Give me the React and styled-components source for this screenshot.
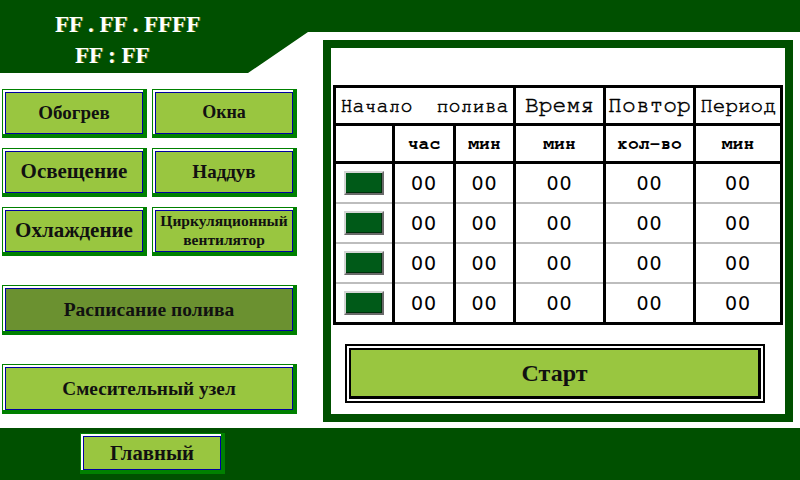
import React from "react";
import styled, { createGlobalStyle } from "styled-components";

const DARK = "#005000";
const FRAME = "#008000";
const FILL = "#99c640";
const FILL_ACTIVE = "#6b9130";

const GlobalStyle = createGlobalStyle`
  html, body {
    margin: 0;
    padding: 0;
    background: #ffffff;
    overflow: hidden;
  }
`;

const Screen = styled.div`
  width: 800px;
  height: 480px;
  display: grid;
  grid-template-rows: 428px 52px;
  background: #ffffff;
`;

const Main = styled.div`
  display: flex;
`;

const LeftCol = styled.div`
  width: 310px;
  display: flex;
  flex-direction: column;
`;

const Clock = styled.div`
  height: 73px;
  background: ${DARK};
  clip-path: polygon(0 0, 100% 0, 100% 32px, 308px 32px, 248px 73px, 0 73px);
  display: flex;
  flex-direction: column;
  font-family: "Liberation Serif", "Times New Roman", serif;
  font-weight: bold;
  font-size: 23px;
  color: #ffffff;
  text-shadow: 1px 0 0 rgba(200, 180, 60, 0.6);
`;

const ClockLine = styled.div`
  padding-left: ${(p) => p.$indent}px;
  height: 31px;
  line-height: 31px;
  margin-top: ${(p) => p.$top || 0}px;
  white-space: pre;
`;

const ButtonGrid = styled.div`
  margin-top: 16px;
  padding-left: 2px;
  display: grid;
  grid-template-columns: 145px 145px;
  grid-auto-rows: 49px;
  column-gap: 5px;
  row-gap: 10px;
`;

const WideStack = styled.div`
  margin-top: 29px;
  padding-left: 2px;
  display: flex;
  flex-direction: column;
  gap: 29px;
`;

const Btn = styled.button`
  box-sizing: border-box;
  width: ${(p) => p.$w}px;
  height: ${(p) => p.$h}px;
  margin: 0;
  padding: 2px 0 0 2px;
  border: 1px solid ${FRAME};
  border-right-width: 4px;
  border-bottom-width: 4px;
  background: #ffffff;
  display: flex;
  cursor: pointer;
`;

const Face = styled.span`
  box-sizing: border-box;
  flex: 1;
  display: flex;
  align-items: center;
  justify-content: center;
  text-align: center;
  border: 1px solid #0000a0;
  background: ${(p) => (p.$active ? FILL_ACTIVE : FILL)};
  font-family: "Liberation Serif", "Times New Roman", serif;
  font-weight: bold;
  font-size: ${(p) => p.$size}px;
  line-height: ${(p) => (p.$size < 17 ? 1.2 : 1.1)};
  color: #111111;
`;

const RightCol = styled.div`
  flex: 1;
  display: flex;
  flex-direction: column;
`;

const TopBand = styled.div`
  height: 32px;
  background: ${DARK};
`;

const Panel = styled.div`
  box-sizing: border-box;
  margin: 8px 10px 0 13px;
  height: 382px;
  border: 8px solid ${DARK};
  background: #ffffff;
  padding: 37px 2px 0 2px;
  display: flex;
  flex-direction: column;
`;

const Table = styled.table`
  width: 447px;
  table-layout: fixed;
  border-collapse: collapse;
  border: 3px solid #000000;
`;

const HeadCell = styled.td`
  border: 3px solid #000000;
  height: 35px;
  padding: 0;
  text-align: center;
  vertical-align: middle;
  font-family: FreeMono, "Liberation Mono", "Courier New", monospace;
  font-size: ${(p) => p.$size}px;
  font-weight: ${(p) => (p.$bold ? "bold" : "normal")};
  -webkit-text-stroke: ${(p) => (p.$bold ? "0" : "0.5px #000")};
  color: #000000;
  white-space: pre;
  overflow: hidden;
`;

const DataCell = styled.td`
  border-left: 3px solid #000000;
  border-right: 3px solid #000000;
  border-top: 2px solid #bdbdbd;
  border-bottom: 2px solid #bdbdbd;
  height: 38px;
  padding: 0;
  text-align: center;
  vertical-align: middle;
  font-family: "DejaVu Sans", Verdana, sans-serif;
  font-size: 19px;
  letter-spacing: 1px;
  color: #000000;
`;

const FirstDataRow = styled.tr`
  td {
    border-top: 3px solid #000000;
  }
`;

const Indicator = styled.div`
  box-sizing: border-box;
  width: 40px;
  height: 24px;
  margin: 0 auto;
  background: #005a18;
  border: 2px solid;
  border-color: #d4d4d4 #6a6a6a #6a6a6a #d4d4d4;
  box-shadow: inset -1px -1px 0 #00300c;
`;

const StartOuter = styled.button`
  box-sizing: border-box;
  margin: 19px 0 0 12px;
  width: 420px;
  height: 59px;
  padding: 2px;
  border: 2px solid #000000;
  background: #ffffff;
  display: flex;
  cursor: pointer;
`;

const StartFace = styled.span`
  flex: 1;
  display: flex;
  align-items: center;
  justify-content: center;
  border: 2px solid #000000;
  border-right-width: 3px;
  border-bottom-width: 3px;
  background: ${FILL};
  font-family: "Liberation Serif", "Times New Roman", serif;
  font-weight: bold;
  font-size: 24px;
  color: #111111;
`;

const BottomBar = styled.div`
  background: ${DARK};
  padding: 5px 0 0 80px;
  display: flex;
  align-items: flex-start;
`;

const gridButtons = [
  { label: "Обогрев", size: 19 },
  { label: "Окна", size: 18 },
  { label: "Освещение", size: 21 },
  { label: "Наддув", size: 19 },
  { label: "Охлаждение", size: 21 },
  { label: "Циркуляционный\nвентилятор", size: 15.5 },
];

const headers = [
  { label: "Время", size: 23 },
  { label: "Повтор", size: 23 },
  { label: "Период", size: 21 },
];

const units = ["час", "мин", "мин", "кол-во", "мин"];

const rows = [0, 1, 2, 3];

function PanelButton({ w, h, size, active, children }) {
  return (
    <Btn $w={w} $h={h}>
      <Face $size={size} $active={active}>
        {children}
      </Face>
    </Btn>
  );
}

export default function App() {
  return (
    <Screen>
      <GlobalStyle />
      <Main>
        <LeftCol>
          <Clock>
            <ClockLine $indent={55} $top={9}>FF . FF . FFFF</ClockLine>
            <ClockLine $indent={75}>FF : FF</ClockLine>
          </Clock>
          <ButtonGrid>
            {gridButtons.map((b) => (
              <PanelButton key={b.label} w={145} h={49} size={b.size}>
                {b.label.split("\n").map((part, i) => (
                  <React.Fragment key={i}>
                    {i > 0 && <br />}
                    {part}
                  </React.Fragment>
                ))}
              </PanelButton>
            ))}
          </ButtonGrid>
          <WideStack>
            <PanelButton w={295} h={50} size={19.5} active>
              Расписание полива
            </PanelButton>
            <PanelButton w={295} h={50} size={19.3}>
              Смесительный узел
            </PanelButton>
          </WideStack>
        </LeftCol>
        <RightCol>
          <TopBand />
          <Panel>
            <Table>
              <colgroup>
                <col style={{ width: 59 }} />
                <col style={{ width: 61 }} />
                <col style={{ width: 60 }} />
                <col style={{ width: 90 }} />
                <col style={{ width: 90 }} />
                <col style={{ width: 87 }} />
              </colgroup>
              <tbody>
                <tr>
                  <HeadCell colSpan={3} $size={20}>
                    {"Начало  полива"}
                  </HeadCell>
                  {headers.map((h) => (
                    <HeadCell key={h.label} $size={h.size}>
                      {h.label}
                    </HeadCell>
                  ))}
                </tr>
                <tr>
                  <HeadCell $size={18} />
                  {units.map((u, i) => (
                    <HeadCell key={i} $size={18} $bold>
                      {u}
                    </HeadCell>
                  ))}
                </tr>
                {rows.map((i) => {
                  const Row = i === 0 ? FirstDataRow : "tr";
                  return (
                    <Row key={i}>
                      <DataCell>
                        <Indicator />
                      </DataCell>
                      {[0, 1, 2, 3, 4].map((c) => (
                        <DataCell key={c}>00</DataCell>
                      ))}
                    </Row>
                  );
                })}
              </tbody>
            </Table>
            <StartOuter>
              <StartFace>Старт</StartFace>
            </StartOuter>
          </Panel>
        </RightCol>
      </Main>
      <BottomBar>
        <PanelButton w={145} h={41} size={20.7}>
          Главный
        </PanelButton>
      </BottomBar>
    </Screen>
  );
}
